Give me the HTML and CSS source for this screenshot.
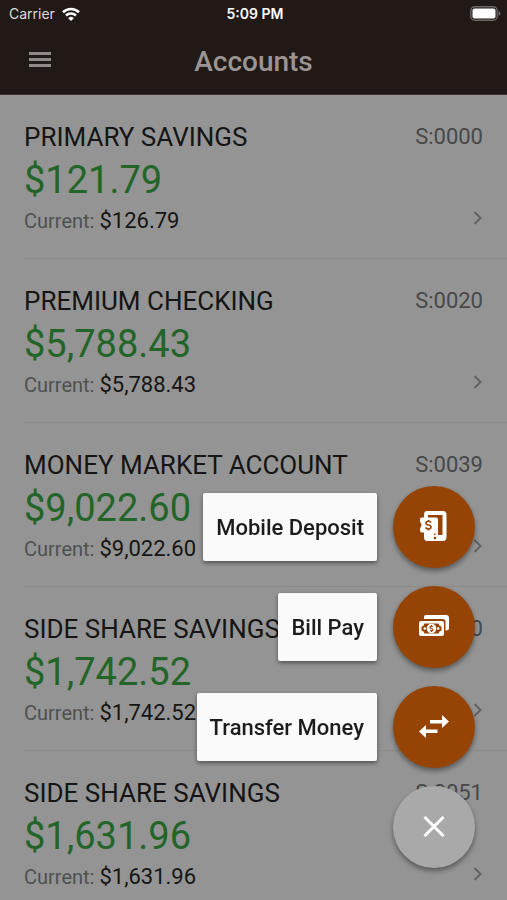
FILE: index.html
```html
<!DOCTYPE html>
<html lang="en">

<head>
    <meta charset="UTF-8">
    <meta name="viewport" content="width=device-width, initial-scale=1.0">
    <link rel="stylesheet" href="styles.css">
    <title>Accounts</title>
</head>

<body>

    <header class="header">
        <div class="status">
            <div class="carrier">
                <span>Carrier</span>
                <svg class="wifi" viewBox="0 0 18 14" width="18" height="14" fill="none" stroke="#fff" stroke-width="2.6">
                    <path d="M1 5.2 A11.5 11.5 0 0 1 17 5.2" />
                    <path d="M4 8.5 A7.2 7.2 0 0 1 14 8.5" />
                    <path d="M9 14 L6.2 11.2 A4 4 0 0 1 11.8 11.2 Z" fill="#fff" stroke="none" />
                </svg>
            </div>
            <span class="time">5:09 PM</span>
            <svg class="battery" viewBox="0 0 31 15" width="31" height="15">
                <rect x="0.8" y="0.8" width="26.4" height="13.4" rx="4" fill="none" stroke="#6d6765" stroke-width="1.4" />
                <rect x="2.5" y="2.5" width="23" height="10" rx="2" fill="#fff" />
                <path d="M28.5 5 Q30.5 5.8 30.5 7.5 Q30.5 9.2 28.5 10 Z" fill="#6d6765" />
            </svg>
        </div>
        <div class="toolbar">
            <button class="menu" aria-label="Menu">
                <svg viewBox="0 0 22 16" width="22" height="16" fill="#8f8b89">
                    <rect y="0" width="22" height="3" />
                    <rect y="6" width="22" height="3" />
                    <rect y="12" width="22" height="3" />
                </svg>
            </button>
            <h1>Accounts</h1>
        </div>
    </header>

    <!-- accounts -->
    <main class="accounts">
        <a class="account" href="#">
            <div class="row">
                <span class="name">PRIMARY SAVINGS</span>
                <span class="number">S:0000</span>
            </div>
            <div class="amount">$121.79</div>
            <div class="row bottom">
                <span class="current">Current: <b>$126.79</b></span>
                <svg class="arrow" viewBox="0 0 10 16" width="10" height="16"><path d="M1.5 2 L7.5 8 L1.5 14" /></svg>
            </div>
        </a>
        <a class="account" href="#">
            <div class="row">
                <span class="name">PREMIUM CHECKING</span>
                <span class="number">S:0020</span>
            </div>
            <div class="amount">$5,788.43</div>
            <div class="row bottom">
                <span class="current">Current: <b>$5,788.43</b></span>
                <svg class="arrow" viewBox="0 0 10 16" width="10" height="16"><path d="M1.5 2 L7.5 8 L1.5 14" /></svg>
            </div>
        </a>
        <a class="account" href="#">
            <div class="row">
                <span class="name">MONEY MARKET ACCOUNT</span>
                <span class="number">S:0039</span>
            </div>
            <div class="amount">$9,022.60</div>
            <div class="row bottom">
                <span class="current">Current: <b>$9,022.60</b></span>
                <svg class="arrow" viewBox="0 0 10 16" width="10" height="16"><path d="M1.5 2 L7.5 8 L1.5 14" /></svg>
            </div>
        </a>
        <a class="account" href="#">
            <div class="row">
                <span class="name">SIDE SHARE SAVINGS</span>
                <span class="number">S:0050</span>
            </div>
            <div class="amount">$1,742.52</div>
            <div class="row bottom">
                <span class="current">Current: <b>$1,742.52</b></span>
                <svg class="arrow" viewBox="0 0 10 16" width="10" height="16"><path d="M1.5 2 L7.5 8 L1.5 14" /></svg>
            </div>
        </a>
        <a class="account" href="#">
            <div class="row">
                <span class="name">SIDE SHARE SAVINGS</span>
                <span class="number">S:0051</span>
            </div>
            <div class="amount">$1,631.96</div>
            <div class="row bottom">
                <span class="current">Current: <b>$1,631.96</b></span>
                <svg class="arrow" viewBox="0 0 10 16" width="10" height="16"><path d="M1.5 2 L7.5 8 L1.5 14" /></svg>
            </div>
        </a>
    </main>

    <!-- floating actions -->
    <div class="actions">
        <div class="action">
            <label class="tip" for="deposit">Mobile Deposit</label>
            <button class="fab" id="deposit">
                <svg viewBox="0 -1 32 32" width="32" height="32">
                    <path fill="#fff" fill-rule="evenodd" d="M9 -1 H25 Q28.5 -1 28.5 3 V25 Q28.5 29 25 29 H9 Q6 29 6 25 V3 Q6 -1 9 -1 Z M10 3 V23 H24.5 V3 Z" />
                    <path fill="#fff" d="M4 5.5 H18 Q20 5.5 20 7.5 V24 L15 20.5 H4 Q2 20.5 2 18.500 V16 Q3.500 15 3.500 13 Q3.500 11 2 10 V7.5 Q2 5.5 4 5.5 Z" />
                    <path fill="#fff" d="M9 20 H16 V23.500 H9 Z" />
                    <circle cx="17" cy="26" r="1.300" fill="#964406" />
                    <path fill="none" stroke="#964406" stroke-width="1.600" d="M13 10.500 Q12 9.300 10.500 9.300 Q8 9.300 8 11.200 Q8 12.700 10.500 13 Q13 13.500 13 15.100 Q13 17 10.500 17 Q8.500 17 7.700 15.500 M10.500 8 V9.500 M10.500 17 V18.500" />
                </svg>
            </button>
        </div>
        <div class="action">
            <label class="tip" for="billpay">Bill Pay</label>
            <button class="fab" id="billpay">
                <svg viewBox="0 0 32 32" width="32" height="32">
                    <path fill="#fff" d="M8 4 H28 Q31 4 31 7 V17 Q31 19.500 28 19.500 H27.500 V11 Q27.500 8 24.500 8 H6 V6 Q6 4 8 4 Z" />
                    <path fill="#fff" fill-rule="evenodd" d="M3 10 H24 Q26 10 26 12 V23 Q26 25 24 25 H3 Q1 25 1 23 V12 Q1 10 3 10 Z M6.500 12.500 Q6 15 3.500 15.500 V19.500 Q6 20 6.500 22.500 H20.500 Q21 20 23.500 19.500 V15.500 Q21 15 20.500 12.500 Z" />
                    <circle cx="13.500" cy="17.500" r="4.800" fill="#fff" />
                    <circle cx="6.800" cy="17.500" r="1.300" fill="#fff" />
                    <circle cx="20.200" cy="17.500" r="1.300" fill="#fff" />
                    <path fill="none" stroke="#964406" stroke-width="1.200" d="M15 15.800 Q12 14.500 12 16.300 Q12 17.200 13.500 17.500 Q15 17.800 15 18.700 Q15 20.500 12 19.200 M13.500 14 V15.500 M13.500 19.500 V21" />
                </svg>
            </button>
        </div>
        <div class="action">
            <label class="tip" for="transfer">Transfer Money</label>
            <button class="fab" id="transfer">
                <svg viewBox="0 0 32 32" width="32" height="32" fill="#fff">
                    <path d="M12 9 H24 V4 L31 10.500 L24 17 V12.500 H12 Z" />
                    <path d="M19.500 18.500 H8 V14 L1 20.500 L8 27 V22 H19.500 Z" />
                </svg>
            </button>
        </div>
        <div class="action">
            <button class="fab close" aria-label="Close">
                <svg viewBox="0 0 32 32" width="32" height="32" fill="none" stroke="#fff" stroke-width="3">
                    <path d="M6.500 6 L25.500 25 M25.500 6 L6.500 25" />
                </svg>
            </button>
        </div>
    </div>

</body>

</html>
```
FILE: styles.css
```css
* {
    box-sizing: border-box;
}

body {
    margin: 0;
    height: 100vh;
    display: flex;
    flex-direction: column;
    background-color: #949494;
    font-family: Roboto, "Liberation Sans", sans-serif;
    color: #151515;
}

.header {
    flex: none;
    height: 95px;
    background-color: #211916;
    border-bottom: 1px solid #3a3431;
}

.status {
    display: grid;
    grid-template-columns: 1fr auto 1fr;
    align-items: center;
    height: 27px;
    padding: 0 6px 0 9px;
    font-family: Inter, sans-serif;
    font-size: 14px;
    color: #fff;
}

.carrier {
    display: flex;
    align-items: center;
    gap: 7px;
    color: #dedcdb;
}

.time {
    font-weight: 600;
}

.battery {
    justify-self: end;
}

.toolbar {
    display: grid;
    grid-template-columns: 80px 1fr 80px;
    align-items: center;
    height: 68px;
}

.menu {
    display: flex;
    justify-content: center;
    padding: 0 0 2px;
    border: 0;
    background: none;
}

h1 {
    margin: 0;
    font-size: 28px;
    font-weight: 500;
    text-align: center;
    color: #9a9594;
}

.accounts {
    flex: 1;
    min-height: 0;
    padding-left: 24px;
    overflow-y: auto;
    scrollbar-width: none;
}

.account {
    display: block;
    height: 164px;
    padding: 26px 24px 0 0;
    border-bottom: 1px solid #8b8b8b;
    color: inherit;
    text-decoration: none;
}

.row {
    display: flex;
    justify-content: space-between;
    align-items: center;
    line-height: 32px;
}

.bottom {
    align-items: flex-start;
}

.name {
    font-size: 26px;
}

.number {
    font-size: 22px;
    color: #484848;
}

.amount {
    font-size: 38px;
    line-height: 54px;
    color: #236529;
}

.current {
    font-size: 20px;
    line-height: 28px;
    color: #505050;
}

.current b {
    font-size: 22px;
    font-weight: 400;
    color: #151515;
}

.arrow {
    margin-top: 3px;
    fill: none;
    stroke: #626262;
    stroke-width: 2;
}

.actions {
    position: fixed;
    right: 32px;
    bottom: 32px;
    display: flex;
    flex-direction: column;
    gap: 18px;
}

.action {
    display: flex;
    justify-content: flex-end;
    align-items: center;
    gap: 16px;
}

.tip {
    padding: 1px 13px 0;
    border-radius: 2px;
    background-color: #fafafa;
    box-shadow: 0 2px 4px rgba(0, 0, 0, 0.45);
    font-size: 22px;
    font-weight: 500;
    line-height: 67px;
    color: #1c1c1c;
}

.fab {
    display: flex;
    justify-content: center;
    align-items: center;
    width: 82px;
    height: 82px;
    padding: 0;
    border: 0;
    border-radius: 50%;
    background-color: #964406;
    box-shadow: 0 3px 5px rgba(0, 0, 0, 0.4);
}

.close {
    background-color: #a9a9a9;
}
```
